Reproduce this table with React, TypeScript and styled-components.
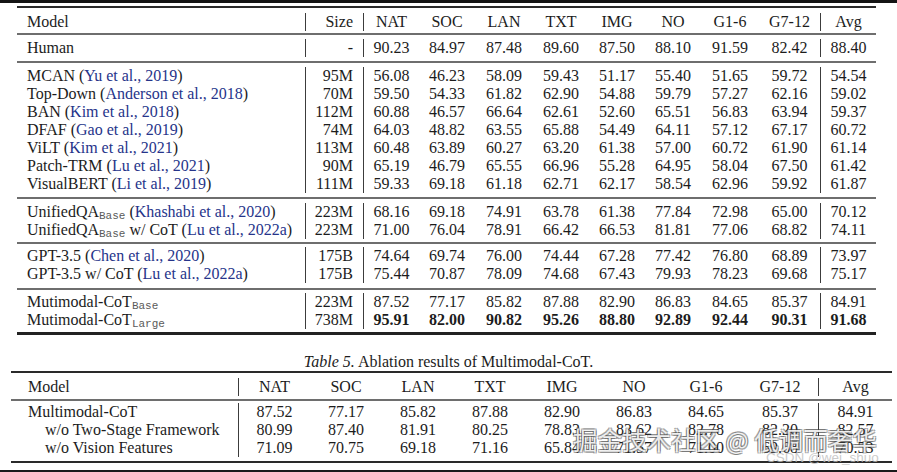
import React from "react";
import styled, { createGlobalStyle } from "styled-components";

const GlobalStyle = createGlobalStyle`
  html, body {
    margin: 0;
    padding: 0;
    background: #fff;
  }
  body {
    font-family: "Liberation Serif", serif;
    color: #1c1c1c;
  }
`;

const Page = styled.div`
  position: relative;
  width: 897px;
  height: 472px;
  overflow: hidden;
  background: #fff;
  font-family: "Liberation Serif", serif;
  font-size: 16px;
`;

const TopBand = styled.div`
  height: 3px;
  background: #141414;
`;

const TableBox = styled.section<{ $left: number; $width: number; $top: number }>`
  margin-left: ${(p) => p.$left}px;
  margin-top: ${(p) => p.$top}px;
  width: ${(p) => p.$width}px;
`;

const Rule = styled.div<{ $h: number; $c?: string }>`
  height: ${(p) => p.$h}px;
  background: ${(p) => p.$c || "#2a2a2a"};
`;

const Group = styled.div<{ $pt: number; $pb: number }>`
  padding-top: ${(p) => p.$pt}px;
  padding-bottom: ${(p) => p.$pb}px;
`;

const Row = styled.div<{ $cols: string }>`
  display: grid;
  grid-template-columns: ${(p) => p.$cols};
  height: 18px;
  line-height: 18px;
  white-space: nowrap;
`;

const Cell = styled.div<{
  $align?: "left" | "right" | "center";
  $bar?: boolean;
  $pl?: number;
  $pr?: number;
  $bold?: boolean;
}>`
  text-align: ${(p) => p.$align || "center"};
  padding-left: ${(p) => p.$pl || 0}px;
  padding-right: ${(p) => p.$pr || 0}px;
  border-left: ${(p) => (p.$bar ? "1px solid #3c3c3c" : "0")};
  font-weight: ${(p) => (p.$bold ? 700 : 400)};
`;

const Cite = styled.span`
  color: #26348a;
`;

const Sub = styled.span`
  font-family: "Liberation Mono", monospace;
  font-size: 11px;
  color: #5a5a5a;
  vertical-align: -2px;
  line-height: 10px;
`;

const Caption = styled.div`
  margin-top: 18px;
  height: 18px;
  line-height: 18px;
  text-align: center;
  & i {
    font-style: italic;
  }
`;

const BottomLine = styled.div`
  margin-top: 7px;
  height: 2px;
  background: #1a1a1a;
`;

const Watermark = styled.div`
  position: absolute;
  left: 573px;
  top: 425px;
  font-family: "Noto Sans CJK SC", "Noto Sans", sans-serif;
  font-size: 24.5px;
  line-height: 30px;
  color: rgba(255, 255, 255, 0.88);
  text-shadow: 1px 1px 0 rgba(60, 60, 60, 0.45), -1px -1px 0 rgba(60, 60, 60, 0.45),
    1px -1px 0 rgba(60, 60, 60, 0.45), -1px 1px 0 rgba(60, 60, 60, 0.45);
  white-space: nowrap;
`;

const SourceTag = styled.div`
  position: absolute;
  left: 766px;
  top: 450px;
  font-family: "Liberation Sans", Arial, sans-serif;
  font-size: 13.5px;
  color: rgba(190, 190, 190, 0.8);
  white-space: nowrap;
`;

const COLS1 = "288px 58px 56px 56px 58px 56px 56px 56px 58px 61px 56px";
const COLS2 = "227px 72px 72px 72px 72px 72px 72px 72px 76px 74px";
const HEADS = ["NAT", "SOC", "LAN", "TXT", "IMG", "NO", "G1-6", "G7-12", "Avg"];

type MainRow = {
  name: React.ReactNode;
  size: string;
  vals: string[];
  bold?: boolean;
};

const groups: MainRow[][] = [
  [
    {
      name: "Human",
      size: "-",
      vals: ["90.23", "84.97", "87.48", "89.60", "87.50", "88.10", "91.59", "82.42", "88.40"],
    },
  ],
  [
    {
      name: (
        <>
          MCAN (<Cite>Yu et al., 2019</Cite>)
        </>
      ),
      size: "95M",
      vals: ["56.08", "46.23", "58.09", "59.43", "51.17", "55.40", "51.65", "59.72", "54.54"],
    },
    {
      name: (
        <>
          Top-Down (<Cite>Anderson et al., 2018</Cite>)
        </>
      ),
      size: "70M",
      vals: ["59.50", "54.33", "61.82", "62.90", "54.88", "59.79", "57.27", "62.16", "59.02"],
    },
    {
      name: (
        <>
          BAN (<Cite>Kim et al., 2018</Cite>)
        </>
      ),
      size: "112M",
      vals: ["60.88", "46.57", "66.64", "62.61", "52.60", "65.51", "56.83", "63.94", "59.37"],
    },
    {
      name: (
        <>
          DFAF (<Cite>Gao et al., 2019</Cite>)
        </>
      ),
      size: "74M",
      vals: ["64.03", "48.82", "63.55", "65.88", "54.49", "64.11", "57.12", "67.17", "60.72"],
    },
    {
      name: (
        <>
          ViLT (<Cite>Kim et al., 2021</Cite>)
        </>
      ),
      size: "113M",
      vals: ["60.48", "63.89", "60.27", "63.20", "61.38", "57.00", "60.72", "61.90", "61.14"],
    },
    {
      name: (
        <>
          Patch-TRM (<Cite>Lu et al., 2021</Cite>)
        </>
      ),
      size: "90M",
      vals: ["65.19", "46.79", "65.55", "66.96", "55.28", "64.95", "58.04", "67.50", "61.42"],
    },
    {
      name: (
        <>
          VisualBERT (<Cite>Li et al., 2019</Cite>)
        </>
      ),
      size: "111M",
      vals: ["59.33", "69.18", "61.18", "62.71", "62.17", "58.54", "62.96", "59.92", "61.87"],
    },
  ],
  [
    {
      name: (
        <>
          UnifiedQA<Sub>Base</Sub> (<Cite>Khashabi et al., 2020</Cite>)
        </>
      ),
      size: "223M",
      vals: ["68.16", "69.18", "74.91", "63.78", "61.38", "77.84", "72.98", "65.00", "70.12"],
    },
    {
      name: (
        <>
          UnifiedQA<Sub>Base</Sub> w/ CoT (<Cite>Lu et al., 2022a</Cite>)
        </>
      ),
      size: "223M",
      vals: ["71.00", "76.04", "78.91", "66.42", "66.53", "81.81", "77.06", "68.82", "74.11"],
    },
  ],
  [
    {
      name: (
        <>
          GPT-3.5 (<Cite>Chen et al., 2020</Cite>)
        </>
      ),
      size: "175B",
      vals: ["74.64", "69.74", "76.00", "74.44", "67.28", "77.42", "76.80", "68.89", "73.97"],
    },
    {
      name: (
        <>
          GPT-3.5 w/ CoT (<Cite>Lu et al., 2022a</Cite>)
        </>
      ),
      size: "175B",
      vals: ["75.44", "70.87", "78.09", "74.68", "67.43", "79.93", "78.23", "69.68", "75.17"],
    },
  ],
  [
    {
      name: (
        <>
          Mutimodal-CoT<Sub>Base</Sub>
        </>
      ),
      size: "223M",
      vals: ["87.52", "77.17", "85.82", "87.88", "82.90", "86.83", "84.65", "85.37", "84.91"],
    },
    {
      name: (
        <>
          Mutimodal-CoT<Sub>Large</Sub>
        </>
      ),
      size: "738M",
      vals: ["95.91", "82.00", "90.82", "95.26", "88.80", "92.89", "92.44", "90.31", "91.68"],
      bold: true,
    },
  ],
];

const groupPad: [number, number][] = [
  [4, 4],
  [4, 4],
  [4, 3],
  [3, 5],
  [3, 3],
];

const ablation = [
  {
    name: "Multimodal-CoT",
    indent: false,
    vals: ["87.52", "77.17", "85.82", "87.88", "82.90", "86.83", "84.65", "85.37", "84.91"],
  },
  {
    name: "w/o Two-Stage Framework",
    indent: true,
    vals: ["80.99", "87.40", "81.91", "80.25", "78.83", "83.62", "82.78", "82.20", "82.57"],
  },
  {
    name: "w/o Vision Features",
    indent: true,
    vals: ["71.09", "70.75", "69.18", "71.16", "65.84", "71.57", "71.00", "69.68", "70.53"],
  },
];

function MainTable() {
  return (
    <TableBox $left={17} $width={859} $top={3}>
      <Rule $h={2} />
      <Group $pt={5} $pb={2}>
        <Row $cols={COLS1}>
          <Cell $align="left" $pl={10}>
            Model
          </Cell>
          <Cell $align="right" $pr={10} $bar>
            Size
          </Cell>
          {HEADS.map((h, i) => (
            <Cell key={h} $bar={i === 0 || i === 8}>
              {h}
            </Cell>
          ))}
        </Row>
      </Group>
      {groups.map((rows, gi) => (
        <React.Fragment key={gi}>
          <Rule $h={2} $c="#6e6e6e" />
          <Group $pt={groupPad[gi][0]} $pb={groupPad[gi][1]}>
            {rows.map((r, ri) => (
              <Row key={ri} $cols={COLS1}>
                <Cell $align="left" $pl={10}>
                  {r.name}
                </Cell>
                <Cell $align="right" $pr={10} $bar>
                  {r.size}
                </Cell>
                {r.vals.map((v, i) => (
                  <Cell key={i} $bar={i === 0 || i === 8} $bold={r.bold}>
                    {v}
                  </Cell>
                ))}
              </Row>
            ))}
          </Group>
        </React.Fragment>
      ))}
      <Rule $h={3} $c="#222" />
    </TableBox>
  );
}

function AblationTable() {
  return (
    <>
      <Caption>
        <i>Table 5.</i> Ablation results of Multimodal-CoT.
      </Caption>
      <TableBox $left={11} $width={881} $top={0}>
        <Rule $h={2} />
        <Group $pt={5} $pb={3}>
          <Row $cols={COLS2}>
            <Cell $align="left" $pl={17}>
              Model
            </Cell>
            {HEADS.map((h, i) => (
              <Cell key={h} $bar={i === 0 || i === 8}>
                {h}
              </Cell>
            ))}
          </Row>
        </Group>
        <Rule $h={2} $c="#6e6e6e" />
        <Group $pt={2} $pb={4}>
          {ablation.map((r) => (
            <Row key={r.name} $cols={COLS2}>
              <Cell $align="left" $pl={r.indent ? 34 : 17}>
                {r.name}
              </Cell>
              {r.vals.map((v, i) => (
                <Cell key={i} $bar={i === 0 || i === 8}>
                  {v}
                </Cell>
              ))}
            </Row>
          ))}
        </Group>
        <Rule $h={2} />
      </TableBox>
    </>
  );
}

export default function App() {
  return (
    <Page>
      <GlobalStyle />
      <TopBand />
      <MainTable />
      <AblationTable />
      <BottomLine />
      <Watermark>掘金技术社区 @ 低调而奢华</Watermark>
      <SourceTag>CSDN @wei_shuo</SourceTag>
    </Page>
  );
}
